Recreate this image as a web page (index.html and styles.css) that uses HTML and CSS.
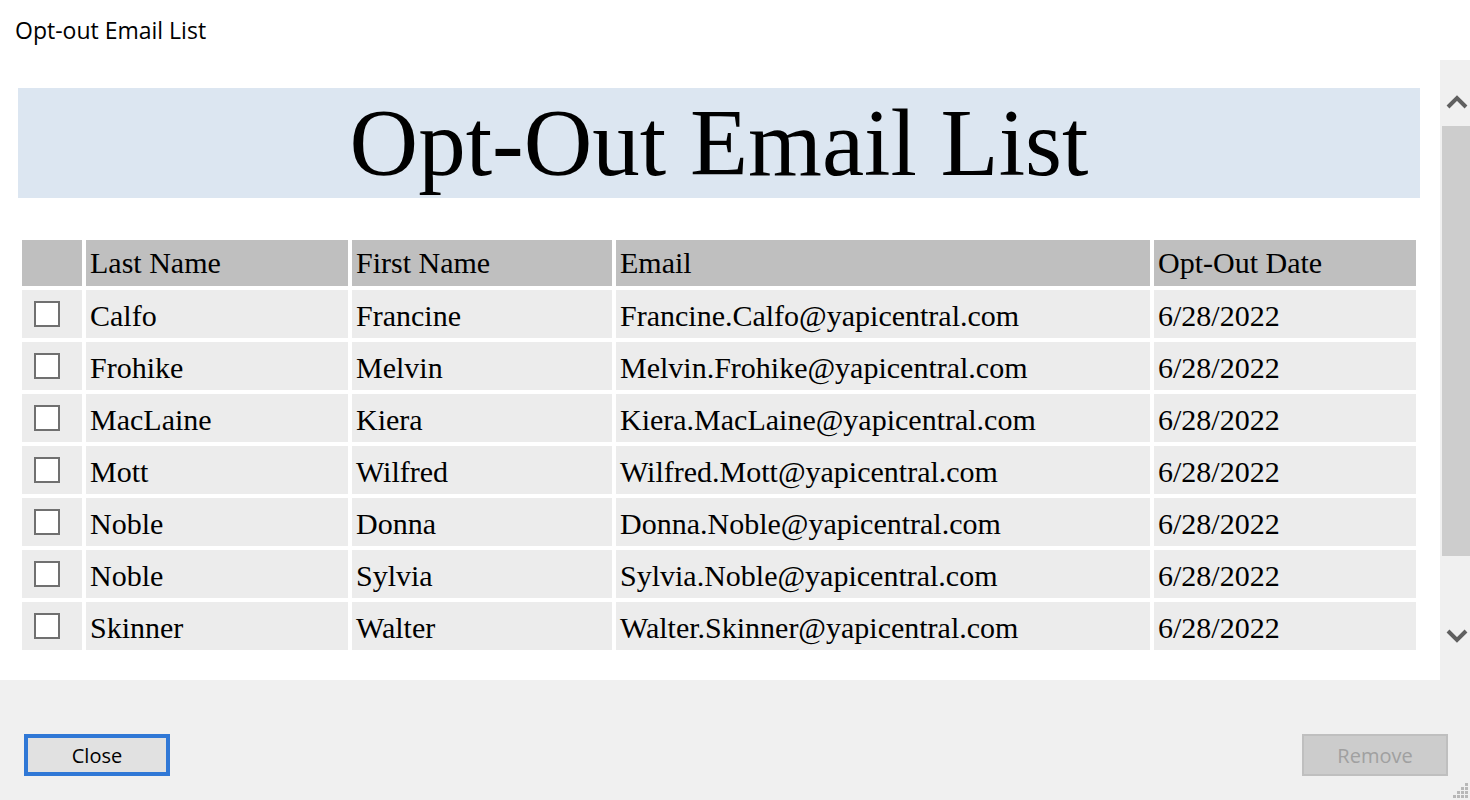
FILE: index.html
```html
<!DOCTYPE html>
<html lang="en">

<head>
  <meta charset="UTF-8">
  <meta name="viewport" content="width=device-width, initial-scale=1.0">
  <link rel="stylesheet" href="styles.css">
  <title>Opt-out Email List</title>
</head>

<body>

  <div class="titlebar">Opt-out Email List</div>

  <div class="main">
    <div class="content">
      <h1 class="banner">Opt-Out Email List</h1>
      <table class="optout-table">
        <thead>
          <tr>
            <th class="check-col"></th>
            <th class="last-col">Last Name</th>
            <th class="first-col">First Name</th>
            <th class="email-col">Email</th>
            <th class="date-col">Opt-Out Date</th>
          </tr>
        </thead>
        <tbody id="rows"></tbody>
      </table>
    </div>

    <!-- scrollbar -->
    <div class="scrollbar">
      <svg class="arrow" width="22" height="18" viewBox="0 0 22 18">
        <path d="M2 15 L11 6 L20 15" fill="none" stroke="#606060" stroke-width="4"/>
      </svg>
      <div class="thumb-track">
        <div class="thumb"></div>
      </div>
      <svg class="arrow" width="22" height="18" viewBox="0 0 22 18">
        <path d="M2 3 L11 12 L20 3" fill="none" stroke="#606060" stroke-width="4"/>
      </svg>
    </div>
  </div>

  <div class="footer">
    <button class="btn btn-default">Close</button>
    <button class="btn btn-disabled" disabled>Remove</button>
    <svg class="grip" width="18" height="18" viewBox="0 0 18 18">
      <rect x="13" y="1" width="3" height="3" fill="#b8b8b8"/>
      <rect x="9" y="5" width="3" height="3" fill="#b8b8b8"/>
      <rect x="13" y="5" width="3" height="3" fill="#b8b8b8"/>
      <rect x="5" y="9" width="3" height="3" fill="#b8b8b8"/>
      <rect x="9" y="9" width="3" height="3" fill="#b8b8b8"/>
      <rect x="13" y="9" width="3" height="3" fill="#b8b8b8"/>
      <rect x="1" y="13" width="3" height="3" fill="#b8b8b8"/>
      <rect x="5" y="13" width="3" height="3" fill="#b8b8b8"/>
      <rect x="9" y="13" width="3" height="3" fill="#b8b8b8"/>
      <rect x="13" y="13" width="3" height="3" fill="#b8b8b8"/>
    </svg>
  </div>

  <script>
    const people = [
      ['Calfo', 'Francine'],
      ['Frohike', 'Melvin'],
      ['MacLaine', 'Kiera'],
      ['Mott', 'Wilfred'],
      ['Noble', 'Donna'],
      ['Noble', 'Sylvia'],
      ['Skinner', 'Walter']
    ];

    const tbody = document.getElementById('rows');
    people.forEach(function (p) {
      const tr = document.createElement('tr');
      tr.innerHTML =
        '<td class="check-col"><span class="checkbox"></span></td>' +
        '<td>' + p[0] + '</td>' +
        '<td>' + p[1] + '</td>' +
        '<td>' + p[1] + '.' + p[0] + '@yapicentral.com</td>' +
        '<td>6/28/2022</td>';
      tbody.appendChild(tr);
    });
  </script>

</body>

</html>
```

FILE: styles.css
```css
body {
  margin: 0;
  background-color: #f0f0f0;
  font-family: "Open Sans", "Noto Sans", sans-serif;
}

.titlebar {
  height: 60px;
  background-color: #fff;
  padding-left: 15px;
  font-size: 23px;
  line-height: 60px;
  color: #000;
  box-sizing: border-box;
}

.main {
  display: flex;
  height: 620px;
  background-color: #fff;
}

.content {
  flex: 1;
  padding: 28px 20px 0 18px;
}

.banner {
  margin: 0;
  height: 110px;
  background-color: #dce6f1;
  font-family: "Liberation Serif", "Times New Roman", serif;
  font-weight: normal;
  font-size: 95px;
  line-height: 110px;
  text-align: center;
  color: #000;
}

.optout-table {
  width: 100%;
  table-layout: fixed;
  margin-top: 38px;
  border-spacing: 4px;
  font-family: "Liberation Serif", "Times New Roman", serif;
  font-size: 30px;
  color: #000;
}

.optout-table th {
  background-color: #bfbfbf;
  height: 46px;
  padding: 0 4px;
  font-weight: normal;
  text-align: left;
}

.optout-table td {
  background-color: #ececec;
  height: 48px;
  padding: 3px 4px 0;
  box-sizing: border-box;
}

.check-col {
  width: 52px;
}

.last-col {
  width: 254px;
}

.first-col {
  width: 252px;
}

.email-col {
  width: 526px;
}

.date-col {
  width: 254px;
}

.checkbox {
  display: block;
  width: 22px;
  height: 22px;
  margin: -3px 0 0 8px;
  border: 2px solid #707070;
  background-color: #fff;
}

/* scrollbar */
.scrollbar {
  width: 30px;
  background-color: #f0f0f0;
  display: flex;
  flex-direction: column;
  align-items: flex-end;
  padding-top: 32px;
  padding-bottom: 34px;
  box-sizing: border-box;
}

.arrow {
  display: block;
  margin-right: 2px;
}

.thumb-track {
  flex: 1;
  width: 28px;
  padding: 16px 0 72px;
}

.thumb {
  height: 430px;
  background-color: #cdcdcd;
}

/* buttons */
.footer {
  position: relative;
  height: 120px;
  display: flex;
  justify-content: space-between;
  align-items: flex-start;
  padding: 54px 22px 0 24px;
  box-sizing: border-box;
}

.btn {
  width: 146px;
  height: 42px;
  font-family: "Open Sans", "Noto Sans", sans-serif;
  font-size: 20px;
  padding: 0;
}

.btn-default {
  background-color: #e1e1e1;
  border: 4px solid #3078d6;
  color: #000;
}

.btn-disabled {
  background-color: #cccccc;
  border: 2px solid #bfbfbf;
  color: #a0a0a0;
}

.grip {
  position: absolute;
  right: 0;
  bottom: 0;
}
```
